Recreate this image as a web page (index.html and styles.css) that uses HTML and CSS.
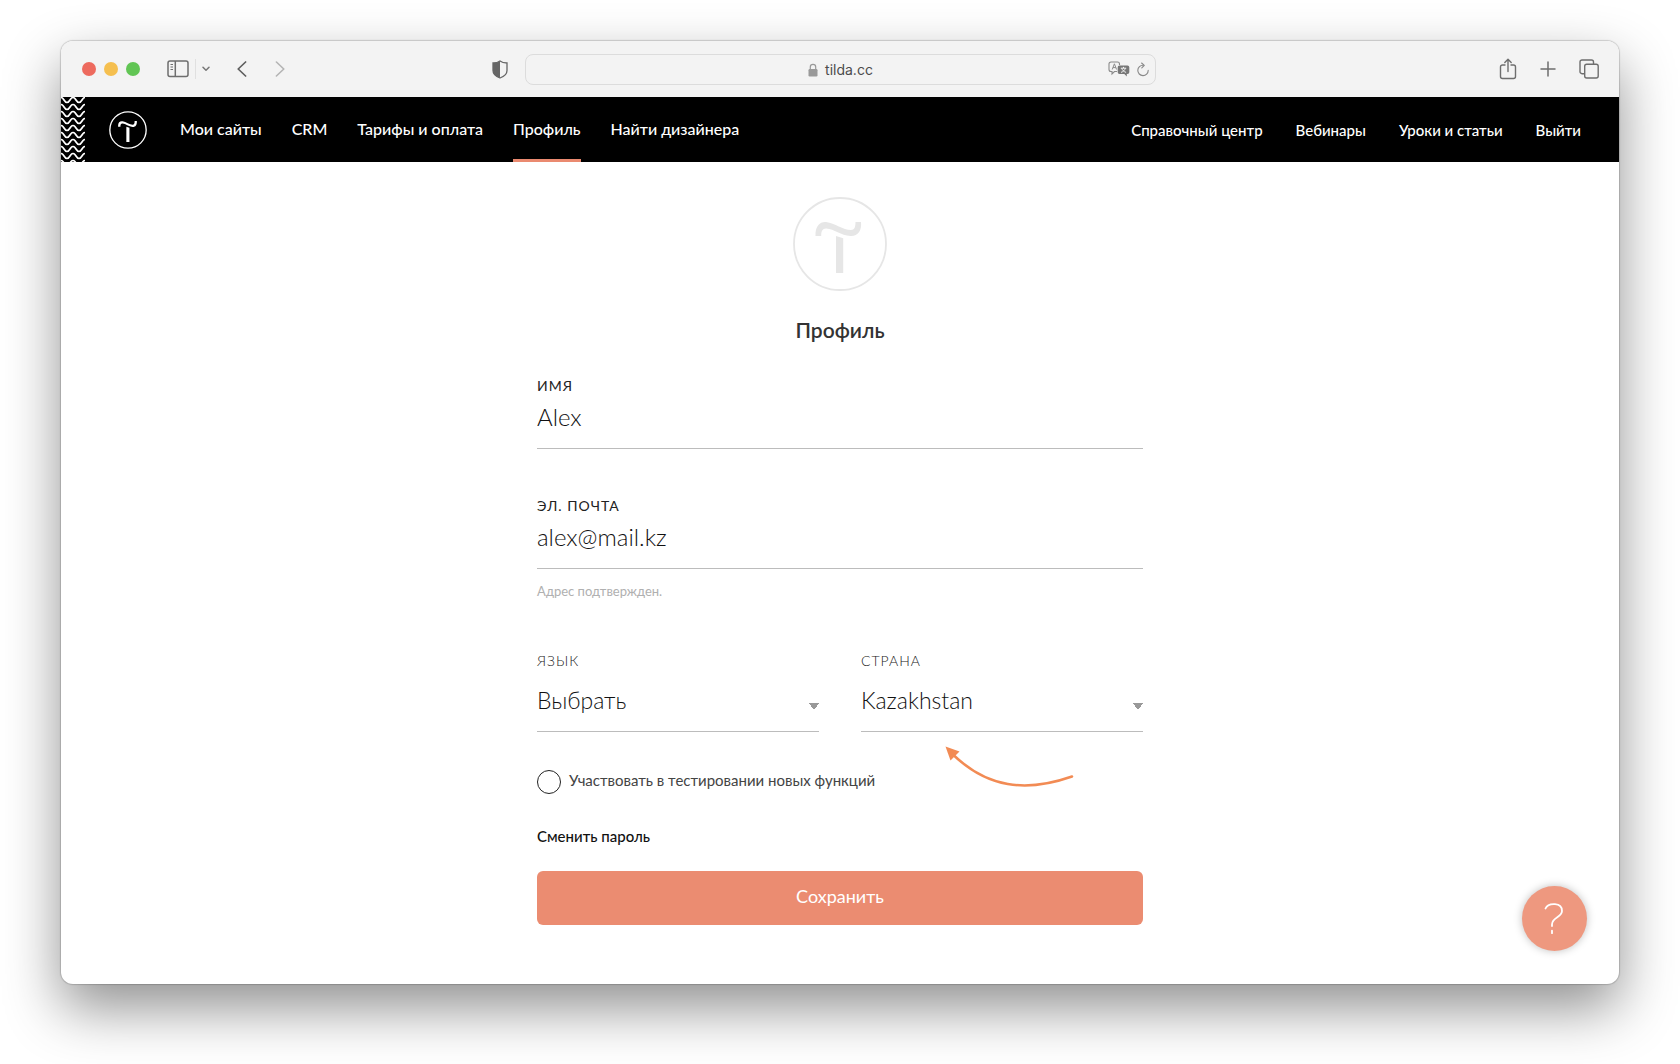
FILE: index.html
```html
<!DOCTYPE html>
<html lang="ru">
<head>
<meta charset="utf-8">
<meta name="viewport" content="width=device-width, initial-scale=1">
<title>Профиль</title>
<link rel="stylesheet" href="styles.css">
</head>
<body>
<div class="window">
  <div class="toolbar">
    <div class="toolbar-side">
      <div class="lights"><span class="light light-close"></span><span class="light light-min"></span><span class="light light-max"></span></div>
      <div class="sidebar-tools">
        <button class="icon-button" type="button" aria-label="Боковая панель">
          <svg width="22" height="18" viewBox="0 0 22 18" fill="none" stroke="#6e6e6e" stroke-width="1.5"><rect x="1" y="1" width="20" height="15.5" rx="2"/><path d="M8.3 1v15.5"/><path d="M3.5 4.5h2.5M3.5 7h2.5M3.5 9.5h2.5" stroke-width="1.1"/></svg>
        </button>
        <span class="divider"></span>
        <button class="icon-button" type="button" aria-label="Группы вкладок">
          <svg width="8" height="6" viewBox="0 0 8 6" fill="none" stroke="#777" stroke-width="1.5" stroke-linecap="round" stroke-linejoin="round"><path d="M1 1.2l3 3 3-3"/></svg>
        </button>
      </div>
      <div class="history">
        <button class="icon-button" type="button" aria-label="Назад">
          <svg width="10" height="16" viewBox="0 0 10 16" fill="none" stroke="#5e5e5e" stroke-width="1.7" stroke-linecap="round" stroke-linejoin="round"><path d="M8.6 1L1.2 8l7.4 7"/></svg>
        </button>
        <button class="icon-button" type="button" aria-label="Вперёд">
          <svg width="10" height="16" viewBox="0 0 10 16" fill="none" stroke="#b4b4b4" stroke-width="1.6" stroke-linecap="round" stroke-linejoin="round"><path d="M1.4 1l7.4 7-7.4 7"/></svg>
        </button>
      </div>
    </div>
    <div class="toolbar-center">
      <svg class="shield" width="16" height="19" viewBox="0 0 16 19"><path d="M8 1C6 2.6 3.700 3 1 3v7.500C1 14 4 16.500 8 18c4-1.500 7-4 7-7.500V3c-2.700 0-5-.4-7-2z" fill="none" stroke="#666" stroke-width="1.300"/><path d="M8 1C6 2.600 3.700 3 1 3v7.500C1 14 4 16.500 8 18z" fill="#666"/></svg>
      <div class="address">
        <div class="address-text">
          <svg width="10" height="14" viewBox="0 0 10 14"><rect x=".5" y="6" width="9" height="7.500" rx="1.200" fill="#999"/><path d="M2.300 6.500V4a2.700 2.700 0 0 1 5.400 0v2.500" fill="none" stroke="#999" stroke-width="1.200"/></svg>
          <span>tilda.cc</span>
        </div>
        <div class="address-tools">
          <button class="icon-button" type="button" aria-label="Перевести">
            <svg width="22" height="16" viewBox="0 0 22 16"><path d="M9 10.500H6.500L4 13v-2.500H3a2 2 0 0 1-2-2V3a2 2 0 0 1 2-2h6.500a2 2 0 0 1 2 2v1" fill="none" stroke="#8a8a8a" stroke-width="1.100"/><path d="M4.200 8.500l2.200-5.700 2.200 5.700M5 6.600h2.800" fill="none" stroke="#8a8a8a"/><path d="M11.500 4.500h8a1.800 1.800 0 0 1 1.800 1.800v4.900a1.800 1.800 0 0 1-1.800 1.800h-.7v2.500L16.300 13h-4.800a1.800 1.800 0 0 1-1.800-1.800V6.300a1.800 1.800 0 0 1 1.800-1.800z" fill="#777"/><path d="M12.800 7.200h5.400M15.500 5.900v1.300M17.300 7.300c-.6 2-2 3.300-4.300 4.100M13.800 7.300c.6 2 2 3.300 4.300 4.100" fill="none" stroke="#f3f3f3"/></svg>
          </button>
          <button class="icon-button" type="button" aria-label="Обновить">
            <svg width="12" height="15" viewBox="0 0 12 15" fill="none" stroke="#888" stroke-width="1.100" stroke-linecap="round" stroke-linejoin="round"><path d="M6.200 3.200A5.200 5.200 0 1 0 11.200 8.400"/><path d="M4.600 1l2.700 2.400-2.500 2.500"/></svg>
          </button>
        </div>
      </div>
    </div>
    <div class="toolbar-side toolbar-right">
      <button class="icon-button" type="button" aria-label="Поделиться">
        <svg width="18" height="22" viewBox="0 0 18 22" fill="none" stroke="#6e6e6e" stroke-width="1.400" stroke-linecap="round" stroke-linejoin="round"><path d="M6 7H3.500A2 2 0 0 0 1.500 9v9.500a2 2 0 0 0 2 2h11a2 2 0 0 0 2-2V9a2 2 0 0 0-2-2H12"/><path d="M9 13.500V1.500M5.800 4.500L9 1.300l3.200 3.200"/></svg>
      </button>
      <button class="icon-button" type="button" aria-label="Новая вкладка">
        <svg width="16" height="16" viewBox="0 0 16 16" fill="none" stroke="#6e6e6e" stroke-width="1.500" stroke-linecap="round"><path d="M8 1v14M1 8h14"/></svg>
      </button>
      <button class="icon-button" type="button" aria-label="Обзор вкладок">
        <svg width="20" height="20" viewBox="0 0 20 20" fill="none" stroke="#6e6e6e" stroke-width="1.400"><rect x="5.700" y="5.200" width="13.500" height="13.800" rx="2"/><path d="M5.500 14.700H3a2 2 0 0 1-2-2V3a2 2 0 0 1 2-2h9.500a2 2 0 0 1 2 2v2"/></svg>
      </button>
    </div>
  </div>

  <header class="site-header">
    <svg class="waves" width="24" height="65" viewBox="0 0 24 65" aria-hidden="true">
      <defs><pattern id="wave" width="12" height="7" patternUnits="userSpaceOnUse"><path d="M-6 5.500C-3 5.500-3 .5 0 .5S3 5.500 6 5.500S9 .5 12 .5S15 5.500 18 5.500M-6 12.500C-3 12.500-3 7.500 0 7.500S3 12.500 6 12.500S9 7.500 12 7.500M-6-1.500C-3-1.500-3-6.500 0-6.500S3-1.500 6-1.500S9-6.500 12-6.500" fill="none" stroke="#fff" stroke-width="1.700"/></pattern></defs>
      <rect width="24" height="65" fill="url(#wave)"/>
    </svg>
    <a class="brand" href="#" aria-label="Tilda">
      <svg width="38" height="38" viewBox="1 1 92 92"><circle cx="47" cy="47" r="44" fill="none" stroke="#fff" stroke-width="3.200"/><path d="M23 39V37C23 28 28 25 34 26C42 27.500 51 34 58 34C62 34 63 31 63 25H68.500C69 35 65 40 58 39.500C49 39 41 32 34 31.500C30 31.200 28.700 34 28.700 39Z" fill="#fff"/><path d="M43 39l7.500 2.500V76H43Z" fill="#fff"/></svg>
    </a>
    <nav class="nav nav-main">
      <a class="nav-link" href="#">Мои сайты</a>
      <a class="nav-link" href="#">CRM</a>
      <a class="nav-link" href="#">Тарифы и оплата</a>
      <a class="nav-link nav-link-active" href="#" aria-current="page">Профиль</a>
      <a class="nav-link" href="#">Найти дизайнера</a>
    </nav>
    <nav class="nav nav-extra">
      <a class="nav-link" href="#">Справочный центр</a>
      <a class="nav-link" href="#">Вебинары</a>
      <a class="nav-link" href="#">Уроки и статьи</a>
      <a class="nav-link" href="#">Выйти</a>
    </nav>
  </header>

  <main class="profile">
    <svg class="avatar" width="94" height="94" viewBox="0 0 94 94" aria-hidden="true"><circle cx="47" cy="47" r="46" fill="none" stroke="#e6e6e6" stroke-width="1.800"/><path d="M22.500 39C22 29 27 24.500 33 25C42 26 50 33 58 33C61.500 33 62.500 30 62.500 25H68C69 34 64.500 39.500 57.500 39C48 38.500 41 32 33.500 31.500C29.500 31.200 28.200 34 28.200 39Z" fill="#e6e6e6"/><path d="M43 39l7.200 2.200V76H43Z" fill="#e6e6e6"/></svg>
    <h1 class="title">Профиль</h1>
    <form class="form" onsubmit="return false">
      <div class="field">
        <label class="label" for="name">ИМЯ</label>
        <input class="control" id="name" type="text" value="Alex">
      </div>
      <div class="field field-email">
        <label class="label" for="email">ЭЛ. ПОЧТА</label>
        <input class="control" id="email" type="email" value="alex@mail.kz">
        <p class="note">Адрес подтвержден.</p>
      </div>
      <div class="columns">
        <div class="field select-field">
          <label class="label label-light" for="language">ЯЗЫК</label>
          <select class="control select" id="language"><option>Выбрать</option></select>
        </div>
        <div class="field select-field">
          <label class="label label-light" for="country">СТРАНА</label>
          <select class="control select" id="country"><option>Kazakhstan</option></select>
          <svg class="pointer" width="132" height="44" viewBox="0 0 132 44" aria-hidden="true"><path d="M9 9.500C42 41 80 47 127 30.500" fill="none" stroke="#f28b54" stroke-width="2.500" stroke-linecap="round"/><path d="M.5 0.500L14.500 5.500 5.500 14.500Z" fill="#f28b54"/></svg>
        </div>
      </div>
      <div class="check-row">
        <input class="check" id="beta" type="checkbox">
        <label class="check-label" for="beta">Участвовать в тестировании новых функций</label>
      </div>
      <a class="password-link" href="#">Сменить пароль</a>
      <button class="save" type="submit">Сохранить</button>
    </form>
  </main>
  <button class="help" type="button" aria-label="Помощь">
    <svg width="20" height="32" viewBox="0 0 20 32" fill="none" stroke="#fff" stroke-width="1.800" stroke-linecap="round"><path d="M1.500 5.500C3.500 .8 8 1 11 1.200C15.500 1.500 18 4 18 8C18 14.500 8 14 8 21.500V23"/><path d="M8 27.700v2.500"/></svg>
  </button>
</div>
</body>
</html>
```
FILE: styles.css
```css
* { box-sizing: border-box; }

body {
  margin: 0;
  min-height: 100vh;
  padding: 41px 61px 80px;
  display: flex;
  background: #fff;
  color: #222;
  font-family: Lato, "Open Sans", sans-serif;
  font-size: 15px;
  line-height: 24px;
}

a { color: inherit; text-decoration: none; }
button { font: inherit; border: 0; cursor: pointer; }
svg { display: block; }

.window {
  position: relative;
  flex: 1;
  min-width: 0;
  border-radius: 12px;
  background: #fff;
  box-shadow: 0 0 1px 1px rgba(0, 0, 0, .16), 0 24px 56px rgba(0, 0, 0, .44);
}

/* Browser toolbar */
.toolbar {
  height: 56px;
  display: flex;
  align-items: center;
  padding: 0 20px;
  border-radius: 12px 12px 0 0;
  background: #f3f3f3;
}
.toolbar-side { flex: 1; display: flex; align-items: center; gap: 27px; padding-left: 1px; }
.toolbar-right { justify-content: flex-end; gap: 23px; }
.toolbar-center { display: flex; align-items: center; gap: 17px; width: 696px; padding-right: 32px; }
.icon-button { padding: 0; background: none; }
.lights { display: flex; gap: 8px; }
.light { width: 14px; height: 14px; border-radius: 50%; }
.light-close { background: #ed6a5e; }
.light-min { background: #f5bf4f; }
.light-max { background: #61c554; }
.sidebar-tools { display: flex; align-items: center; gap: 6px; }
.divider { width: 1px; height: 20px; background: #e0e0e0; }
.history { display: flex; gap: 28px; }
.address {
  flex: 1;
  height: 31px;
  display: grid;
  grid-template-columns: 1fr auto 1fr;
  align-items: center;
  padding: 0 6px;
  border: 1px solid #dcdcdc;
  border-radius: 8px;
  font-family: Inter, sans-serif;
  font-size: 14px;
  color: #4c4c4c;
}
.address-text { grid-column: 2; display: flex; align-items: center; gap: 7px; padding-top: 2px; }
.address-tools { display: flex; justify-content: flex-end; align-items: center; gap: 7px; }

/* Site header */
.site-header {
  height: 65px;
  display: flex;
  align-items: center;
  padding-right: 38px;
  background: #000;
  color: #fff;
}
.brand { margin: 0 33px 0 24px; }
.nav { display: flex; height: 100%; font-weight: 500; white-space: nowrap; }
.nav-main { gap: 30px; font-size: 16px; }
.nav-link { line-height: 63px; }
.nav-link-active { border-bottom: 3px solid #ea8a70; }
.nav-extra { gap: 33px; margin-left: auto; }
.nav-extra .nav-link { line-height: 67px; }

/* Profile form */
.profile { width: 100%; max-width: 606px; margin: 0 auto; padding: 35px 0 58px; }
.avatar { margin: 0 auto 25px; }
.title { margin: 0 0 32px; text-align: center; font-size: 21px; line-height: 28px; font-weight: 600; color: #333; }
.form { display: flex; flex-direction: column; }
.field { display: flex; flex-direction: column; margin-bottom: 47px; }
.field-email { margin-bottom: 50px; }
.label { font-size: 14px; line-height: 20px; letter-spacing: 1px; color: #222; }
.label-light { font-weight: 300; }
.control {
  width: 100%;
  height: 53px;
  padding: 0 0 12px;
  border: 0;
  border-bottom: 1px solid #bcbcbc;
  border-radius: 0;
  background: transparent;
  color: #111;
  font: 300 24px/36px Lato, "Open Sans", sans-serif;
}
.note { margin: 12px 0 0; font-size: 13px; line-height: 20px; color: #b0b0b0; }
.columns { display: grid; grid-template-columns: 1fr 1fr; gap: 42px; }
.select-field { position: relative; gap: 8px; margin-bottom: 38px; }
.select {
  appearance: none;
  padding-bottom: 10px;
  font-size: 23px;
  background: conic-gradient(from -36deg at 50% 100%, #999 72deg, transparent 0) right top 24px / 10px 7px no-repeat;
}
.pointer { position: absolute; left: 84px; top: 95px; }
.check-row { display: flex; align-items: flex-start; gap: 8px; margin-bottom: 30px; }
.check { appearance: none; width: 24px; height: 24px; margin: 0; border: 1px solid #222; border-radius: 50%; }
.check-label { line-height: 20px; color: #444; }
.password-link { align-self: flex-start; margin-bottom: 23px; color: #111; font-weight: 500; }
.save { height: 54px; padding: 0 0 5px; border-radius: 6px; background: #eb8c71; color: #fff; font-size: 18px; }

.help {
  position: absolute;
  right: 32px;
  bottom: 33px;
  width: 65px;
  height: 65px;
  display: grid;
  place-items: center;
  padding: 0 2px 0 0;
  border-radius: 50%;
  background: #ee987f;
  box-shadow: 0 0 8px rgba(0, 0, 0, .25);
}
```
